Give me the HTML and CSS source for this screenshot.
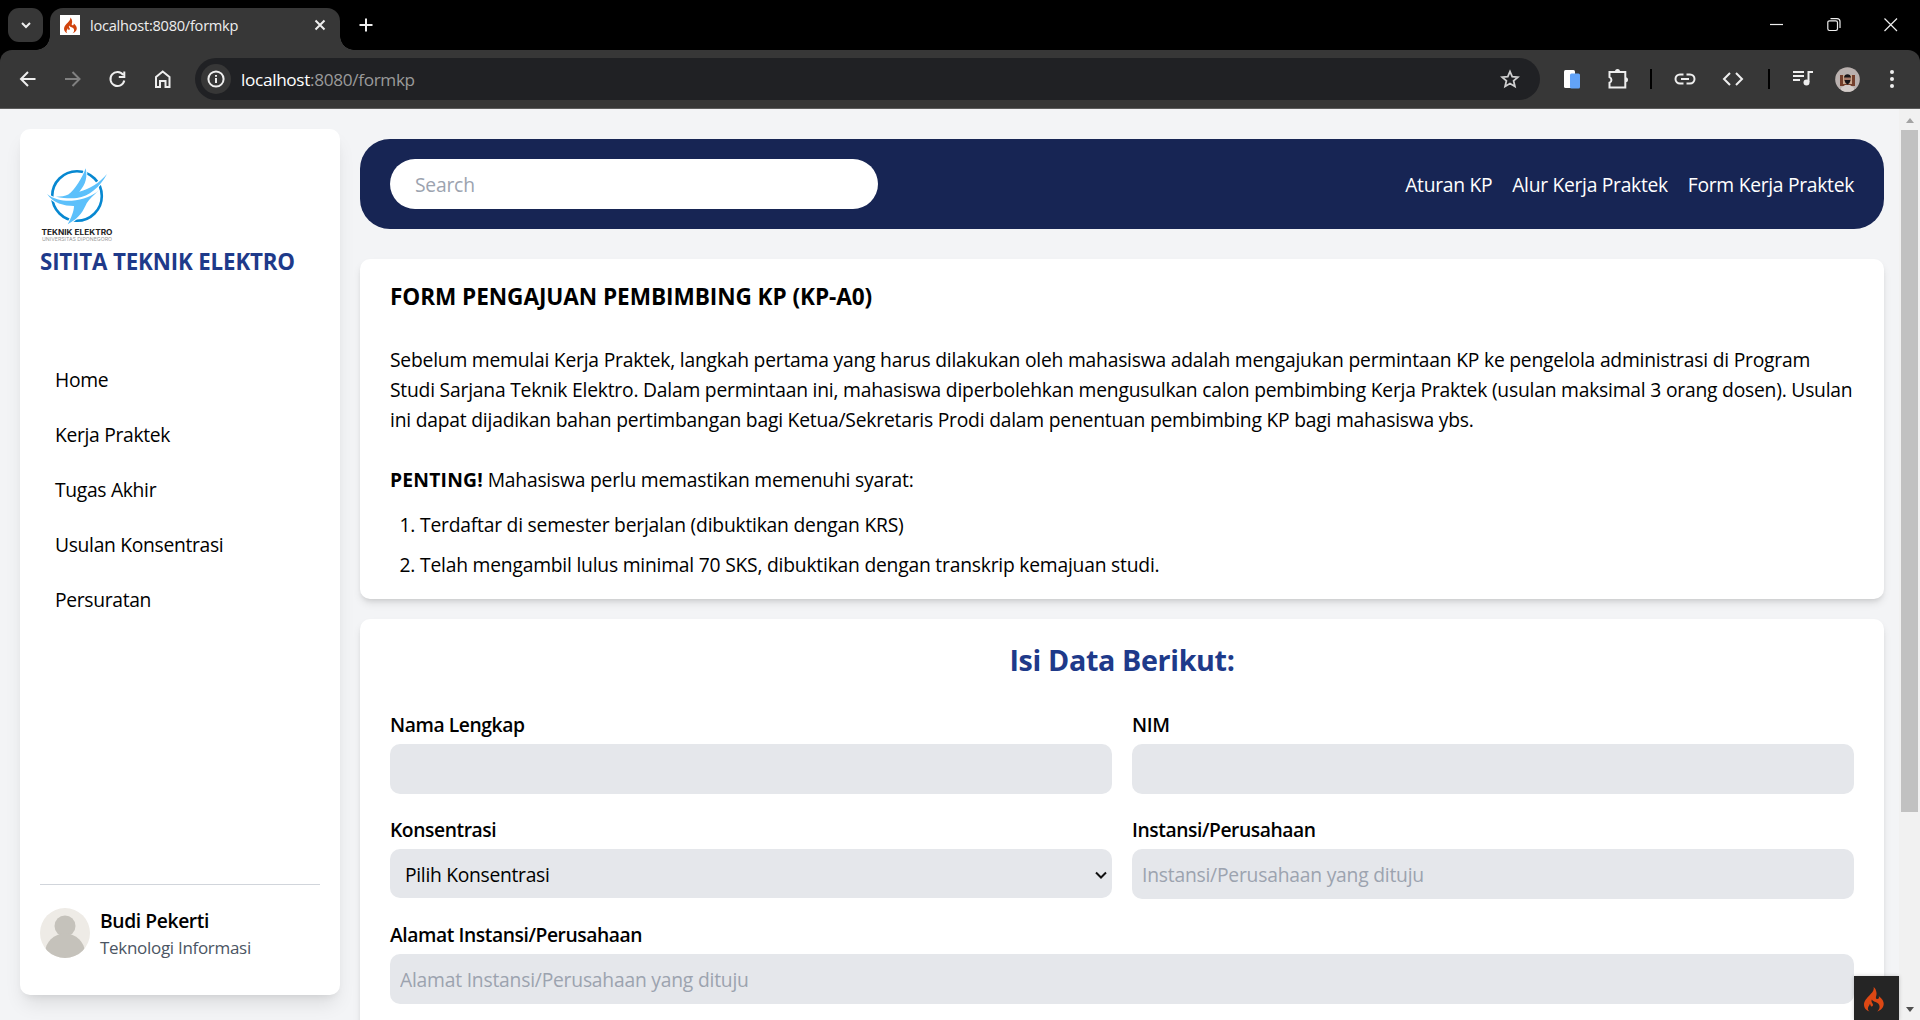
FILE: index.html
```html
<!DOCTYPE html>
<html lang="id">
<head>
<meta charset="utf-8">
<title>localhost:8080/formkp</title>
<link rel="stylesheet" href="styles.css">
</head>
<body>
<svg width="0" height="0" class="defs">
  <symbol id="flame" viewBox="0 0 20 25">
    <path d="M9.6 0C10.4 3.4 8 5.600 5.600 8.300C3 11.100 0 13.800 0 17.600C0 21 2.200 23.600 5.600 24.600C4.200 23.600 3.600 22.300 4 20.800C4.300 19.200 5.700 18.400 5.800 16.700C7 18 6.400 19 7.200 19.400C8.600 19.600 9.400 18.300 8.800 16.900C8.200 15.400 6.800 14.800 7.900 12.400C8.800 14.800 12.300 14.300 14.400 16.800C16.500 19.400 15.600 22.600 13.200 24.600C17 23.300 19.800 20.400 19.700 16.800C19.600 12.900 16.800 10.900 14.800 9.300C15.400 11.300 14.400 12.300 13 12C10.700 11.400 12.900 8.900 12.500 5.800C12.200 3.200 11.200 1.200 9.600 0Z"/>
  </symbol>
</svg>
<div class="browser">
  <header class="tabstrip">
    <div class="tab-search"><svg width="12" height="8" viewBox="0 0 12 8"><path d="M2 2l4 4 4-4" class="ln w2"/></svg></div>
    <div class="tab">
      <span class="favicon"><svg width="13" height="17"><use href="#flame"/></svg></span>
      <span class="tab-title">localhost:8080/formkp</span>
      <svg width="12" height="12" viewBox="0 0 12 12"><path d="M1.500 1.500l9 9M10.500 1.500l-9 9" class="ln w2"/></svg>
    </div>
    <svg class="new-tab" width="14" height="14" viewBox="0 0 14 14"><path d="M7 .5v13M.5 7h13" class="ln w2"/></svg>
    <div class="window-buttons">
      <svg width="14" height="14" viewBox="0 0 14 14"><path d="M0 6.500h13" class="ln"/></svg>
      <svg width="14" height="14" viewBox="0 0 14 14"><path d="M.8 4.500a1.700 1.700 0 0 1 1.700-1.700h6.300a1.700 1.700 0 0 1 1.700 1.700v6.300a1.700 1.700 0 0 1-1.700 1.700H2.500a1.700 1.700 0 0 1-1.700-1.700zM3.500.6h6.500a3 3 0 0 1 3 3v6.500" class="ln"/></svg>
      <svg width="14" height="14" viewBox="0 0 14 14"><path d="M.5.5l12.500 12.500M13 .5L.5 13" class="ln"/></svg>
    </div>
  </header>
  <div class="toolbar">
    <div class="nav-buttons">
      <svg width="20" height="20" viewBox="0 0 20 20"><path d="M17.500 10H3M10 3l-7 7 7 7" class="ln w2"/></svg>
      <svg class="dim" width="20" height="20" viewBox="0 0 20 20"><path d="M2 10h14.500M9.500 3l7 7-7 7" class="ln w2"/></svg>
      <svg width="20" height="20" viewBox="0 0 20 20"><path d="M15.200 6A7 7 0 1 0 16.300 11.500M16.300 2.500v5.500h-5.500" class="ln w2"/></svg>
      <svg width="20" height="20" viewBox="0 0 20 20"><path d="M3 8l6.700-5.500L16.500 8v10h-4v-6h-5.500v6H3z" class="ln w2"/></svg>
    </div>
    <div class="omnibox">
      <span class="site-info"><svg width="18" height="18" viewBox="0 0 18 18"><circle cx="9" cy="9" r="7.600" class="ln w2"/><path d="M9 8v5M9 5v1.800" class="ln w2"/></svg></span>
      <span class="url"><b>localhost</b>:8080/formkp</span>
      <svg class="star" width="20" height="20" viewBox="0 0 20 20"><path d="M10 2.500l2.200 5.200 5.700.5-4.300 3.700 1.300 5.500L10 14.500l-4.900 2.900 1.300-5.500L2.100 8.200l5.700-.5z" class="ln w18"/></svg>
    </div>
    <div class="extensions">
      <svg class="ext-doc" width="18" height="20" viewBox="0 0 18 20"><rect x="1" y="1" width="11" height="18" rx="1.500" fill="#fff"/><rect x="7" y="4.500" width="10" height="15" rx="1.500" fill="#62a3f8"/></svg>
      <svg class="ext-puzzle" width="22" height="22" viewBox="0 0 22 22"><path d="M2.500 4h15.800V19.500H2.500v-4.800a3 3 0 0 0 0-5.600z" class="ln w2"/><path d="M8 3.500a2.500 2.500 0 0 1 5 0zM18.500 9.300a2.500 2.500 0 0 1 0 5z" fill="#eee"/></svg>
      <i class="divider"></i>
      <svg class="ext-link" width="22" height="12" viewBox="0 0 22 12"><path d="M9.500 1.500H6a4.500 4.500 0 0 0 0 9h3.500M12.500 1.500H16a4.500 4.500 0 0 1 0 9h-3.500M7 6h8" class="ln w2"/></svg>
      <svg class="ext-code" width="22" height="14" viewBox="0 0 22 14"><path d="M8 1L2 7l6 6M14 1l6 6-6 6" class="ln w2"/></svg>
      <i class="divider second"></i>
      <svg class="ext-media" width="20" height="18" viewBox="0 0 20 18"><path d="M0 2h11M0 6h11M0 10h7M15.500 12V2H20" class="ln w2"/><circle cx="13.500" cy="12.500" r="3" fill="#eee"/></svg>
      <svg class="ext-user" width="25" height="25" viewBox="0 0 25 25"><defs><clipPath id="round"><circle cx="12.500" cy="12.500" r="12.300"/></clipPath></defs><g clip-path="url(#round)"><path fill="#b9b0ae" d="M0 0h25v25H0z"/><path fill="#743f2c" d="M5 8h15v11H5z"/><path fill="#c9a98f" d="M8 8h9v9H8z"/><path fill="#d3ccc9" d="M6 21l4-3h5l4 3v4H6z"/><circle cx="12.500" cy="12" r="3.600" fill="#a77a68"/><path fill="#171418" d="M9 10.500c0-4.500 7-4.500 7 0zM9.500 13h6l-1 3-2 1.500-2-1.500z"/></g></svg>
      <svg class="ext-more" width="6" height="20" viewBox="0 0 6 20"><g fill="#eee"><circle cx="3" cy="3" r="2"/><circle cx="3" cy="10" r="2"/><circle cx="3" cy="17" r="2"/></g></svg>
    </div>
  </div>
  <div class="viewport">
    <aside class="sidebar">
      <svg class="logo" width="75" height="75" viewBox="0 0 75 75">
        <circle cx="37" cy="30" r="24.800" fill="none" stroke="#0788d1" stroke-width="2.600"/>
        <path class="bolt" d="M45.700 2.300C42.500 11 35 24 28.300 28.500C25 30.300 21 30.700 16 30.700C24 32.500 32 32.500 37 32C49 30.500 60 21 67 8C59 17.500 50 22.500 39.300 25.700C46 18 47.500 11 45.700 2.300Z"/>
        <path class="bolt" d="M7 28C14 33.500 22 35 31.700 34.700C43 34 53 30 59 24C54 29 49 33.500 46.700 37.300C43 44.500 41 51 27.700 58.300C31 52 34 45.500 34 40C24 40 13 37 7 28Z"/>
        <text x="1.500" y="68.500" class="logo-name" textLength="71" lengthAdjust="spacingAndGlyphs">TEKNIK ELEKTRO</text>
        <text x="2" y="75" class="logo-sub" textLength="70" lengthAdjust="spacingAndGlyphs">UNIVERSITAS DIPONEGORO</text>
      </svg>
      <h1>SITITA TEKNIK ELEKTRO</h1>
      <nav class="menu"><a>Home</a><a>Kerja Praktek</a><a>Tugas Akhir</a><a>Usulan Konsentrasi</a><a>Persuratan</a></nav>
      <div class="profile">
        <svg width="50" height="50" viewBox="0 0 50 50"><defs><clipPath id="face"><circle cx="25" cy="25" r="25"/></clipPath></defs><g clip-path="url(#face)"><path fill="#eeebe6" d="M0 0h50v50H0z"/><circle cx="25" cy="18" r="10.500" fill="#c5c2bb"/><ellipse cx="25" cy="45" rx="20" ry="19.500" fill="#c5c2bb"/></g></svg>
        <div><strong>Budi Pekerti</strong><small>Teknologi Informasi</small></div>
      </div>
    </aside>
    <main>
      <div class="topbar">
        <input class="search" placeholder="Search">
        <nav><a>Aturan KP</a><a>Alur Kerja Praktek</a><a>Form Kerja Praktek</a></nav>
      </div>
      <section class="card info">
        <h2>FORM PENGAJUAN PEMBIMBING KP (KP-A0)</h2>
        <p>Sebelum memulai Kerja Praktek, langkah pertama yang harus dilakukan oleh mahasiswa adalah mengajukan permintaan KP ke pengelola administrasi di Program<br>Studi Sarjana Teknik Elektro. Dalam permintaan ini, mahasiswa diperbolehkan mengusulkan calon pembimbing Kerja Praktek (usulan maksimal 3 orang dosen). Usulan<br>ini dapat dijadikan bahan pertimbangan bagi Ketua/Sekretaris Prodi dalam penentuan pembimbing KP bagi mahasiswa ybs.</p>
        <p><b>PENTING!</b> Mahasiswa perlu memastikan memenuhi syarat:</p>
        <ol><li>Terdaftar di semester berjalan (dibuktikan dengan KRS)</li><li>Telah mengambil lulus minimal 70 SKS, dibuktikan dengan transkrip kemajuan studi.</li></ol>
      </section>
      <section class="card form">
        <h2>Isi Data Berikut:</h2>
        <div class="fields">
          <label><span class="caption">Nama Lengkap</span><input></label>
          <label><span class="caption">NIM</span><input></label>
          <label><span class="caption">Konsentrasi</span><span class="select">Pilih Konsentrasi<svg width="12" height="8" viewBox="0 0 12 8"><path d="M1 1.500l5 5 5-5" fill="none" stroke="#111" stroke-width="2"/></svg></span></label>
          <label><span class="caption">Instansi/Perusahaan</span><input placeholder="Instansi/Perusahaan yang dituju"></label>
          <label class="wide"><span class="caption">Alamat Instansi/Perusahaan</span><input placeholder="Alamat Instansi/Perusahaan yang dituju"></label>
        </div>
      </section>
    </main>
    <div class="scrollbar"><i class="up"></i><i class="thumb"></i><i class="down"></i></div>
    <div class="debug"><svg width="20" height="25"><use href="#flame"/></svg></div>
  </div>
</div>
</body>
</html>
```
FILE: styles.css
```css
* { box-sizing: border-box; }
body { margin: 0; height: 1020px; overflow: hidden; font-family: "Open Sans", sans-serif; font-size: 19.3px; letter-spacing: -.22px; line-height: 30px; color: #000; }
svg { display: block; flex: none; }
.defs { position: absolute; }
.ln { fill: none; stroke: #eee; stroke-width: 1.2; }
.w18 { stroke-width: 1.8; }
.w2 { stroke-width: 2; }
h1, h2, p, ol { margin: 0; }

/* Browser window */
.browser { height: 1020px; display: flex; flex-direction: column; background: #000; }
.tabstrip { height: 50px; flex: none; display: flex; align-items: flex-start; padding: 8px 0 0 8px; }
.tab-search { width: 35px; height: 34px; border-radius: 11px; background: #373737; display: grid; place-items: center; margin-right: 7px; }
.tab { position: relative; width: 290px; height: 42px; background: #373737; border-radius: 13px 13px 0 0; display: flex; align-items: center; padding: 0 14px 8px 10px; }
.tab::before, .tab::after { content: ""; position: absolute; bottom: 0; width: 14px; height: 14px; }
.tab::before { left: -14px; background: radial-gradient(circle at 0 0, transparent 13.5px, #373737 14px); }
.tab::after { right: -14px; background: radial-gradient(circle at 100% 0, transparent 13.5px, #373737 14px); }
.favicon { width: 20px; height: 20px; background: #fff; fill: #d0420c; display: grid; place-items: center; margin-right: 10px; }
.tab-title { flex: 1; font-size: 14.6px; letter-spacing: -.25px; color: #eee; }
.new-tab { margin: 10px 0 0 19px; }
.window-buttons { display: flex; gap: 43px; margin: 10px 22px 0 auto; }
.toolbar { height: 59px; flex: none; background: #373737; border-bottom: 1px solid #5c5c5c; border-radius: 12px 12px 0 0; display: flex; align-items: center; padding: 0 25px 0 18px; }
.nav-buttons { display: flex; gap: 25px; width: 177px; }
.dim { opacity: .4; }
.omnibox { width: 1345px; height: 42px; border-radius: 21px; background: #202124; display: flex; align-items: center; padding: 0 20px 0 6px; }
.site-info { width: 30px; height: 30px; border-radius: 50%; background: #373737; display: grid; place-items: center; margin-right: 10px; }
.url { flex: 1; font-size: 17.2px; letter-spacing: -.33px; color: #9a9a9a; padding-top: 1px; }
.url b { font-weight: 400; color: #fff; }
.star { opacity: .85; }
.extensions { flex: 1; display: flex; align-items: center; }
.ext-doc { margin-left: 23px; }
.ext-puzzle { margin: 0 21px 0 26px; }
.divider { width: 2px; height: 20px; background: #000; }
.ext-link { margin: 0 26px 0 22px; }
.second { margin-left: 24px; }
.ext-media { margin: 0 22px 0 23px; }
.ext-more { margin-left: 29px; }

/* Sidebar */
.viewport { flex: 1; min-height: 0; position: relative; overflow: hidden; display: flex; background: #f3f4f6; }
.sidebar { width: 320px; height: 866px; margin: 20px 20px 0; flex: none; background: #fff; border-radius: 10px; box-shadow: 0 12px 19px -4px rgba(0,0,0,.1), 0 5px 8px -5px rgba(0,0,0,.1); padding: 37px 20px 0; display: flex; flex-direction: column; }
.logo-name { font: 700 7px Inter, sans-serif; letter-spacing: 0; fill: #222; }
.logo-sub { font: 400 5px Inter, sans-serif; letter-spacing: 0; fill: #999; }
.bolt { fill: #5cc0fb; stroke: #fff; stroke-width: 2; paint-order: stroke; }
.sidebar h1 { font-size: 22.3px; letter-spacing: -.15px; line-height: 35px; font-weight: 700; color: #1e3a8a; margin-top: 3px; white-space: nowrap; }
.menu { display: flex; flex-direction: column; gap: 25px; padding: 86px 15px 0; letter-spacing: -.32px; }
.profile { margin-top: auto; height: 111px; border-top: 1px solid #d1d5db; display: flex; gap: 10px; padding-top: 23px; }
.profile strong { display: block; font-weight: 600; letter-spacing: -.4px; line-height: 26px; }
.profile small { display: block; font-size: 17px; letter-spacing: -.3px; line-height: 28px; color: #4b5563; }

/* Main column */
main { width: 1524px; flex: none; padding-top: 30px; }
.topbar { height: 90px; background: #172554; border-radius: 30px; display: flex; align-items: center; justify-content: space-between; padding: 0 30px; color: #fff; margin-bottom: 30px; }
.topbar nav { display: flex; gap: 20px; letter-spacing: -.3px; padding-top: 2px; }
input, .select { font: inherit; letter-spacing: inherit; border: 0; outline: 0; }
input::placeholder { color: #9ca3af; opacity: 1; }
.search { width: 488px; height: 50px; border-radius: 25px; padding: 0 24px 0 25px; background: #fff; }
.card { background: #fff; border-radius: 10px; box-shadow: 0 5px 8px -1px rgba(0,0,0,.1), 0 3px 5px -2px rgba(0,0,0,.1); padding: 20px 30px; margin-bottom: 20px; }
.info { height: 340px; white-space: nowrap; }
.info h2 { font-size: 22.6px; letter-spacing: -.07px; line-height: 35px; font-weight: 700; margin-bottom: 31px; }
.info p { margin-bottom: 30px; }
.info p + p { margin-bottom: 15px; }
.info b { letter-spacing: .2px; }
ol { padding-left: 30px; display: grid; gap: 10px; }
.form { height: 500px; }
.form h2 { text-align: center; color: #1e3a8a; font-size: 28.7px; letter-spacing: -.35px; line-height: 42px; font-weight: 700; margin-bottom: 28px; }
.fields { display: grid; grid-template-columns: 1fr 1fr; gap: 20px; }
label { display: block; height: 85px; }
.caption { display: block; font-weight: 600; letter-spacing: -.43px; padding-top: 1px; height: 30px; }
.wide { grid-column: 1 / 3; }
label input, .select { display: flex; width: 100%; height: 50px; margin-top: 5px; border-radius: 10px; background: #e5e7eb; padding: 1px 10px 0; }
.select { height: 49px; align-items: center; justify-content: space-between; padding: 2px 5px 0 15px; letter-spacing: -.3px; }

/* Overlays */
.scrollbar { position: absolute; right: 0; top: 0; bottom: 0; width: 21px; background: #f1f1f1; display: flex; flex-direction: column; align-items: center; }
.up, .down { border: 4.5px solid transparent; }
.up { border-top: 0; border-bottom: 5px solid #a3a3a3; margin: 9px 0 7px; }
.down { border-bottom: 0; border-top: 5px solid #505050; margin: auto 0 8px; }
.thumb { width: 17px; height: 682px; background: #c1c1c1; }
.debug { position: absolute; right: 21px; bottom: 0; width: 45px; height: 44px; background: #252525; fill: #dd4814; padding: 11px 0 0 10px; box-shadow: 0 0 4px rgba(0,0,0,.2); }
```
